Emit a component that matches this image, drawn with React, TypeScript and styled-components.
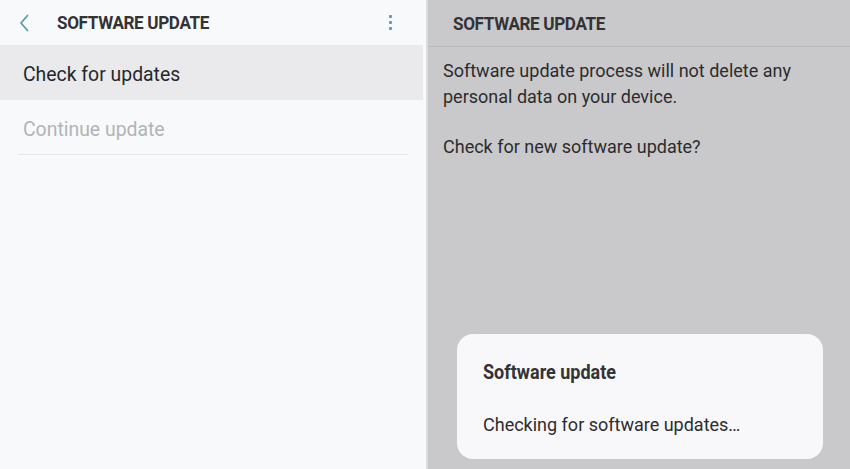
import styled, { createGlobalStyle } from "styled-components";

const GlobalStyle = createGlobalStyle`
  html, body {
    margin: 0;
    padding: 0;
    width: 850px;
    height: 469px;
    overflow: hidden;
    font-family: Roboto, "Liberation Sans", sans-serif;
  }
`;

const TEAL = "#5a9ea6";

const App = () => {
  return (
    <>
      <GlobalStyle />
      <StyledScreen>
        <StyledLeft>
          <StyledHeader>
            <StyledBack aria-label="Back">
              <svg width="12" height="18" viewBox="0 0 12 18">
                <path
                  d="M9.5 1.5 L3 9 L9.5 16.5"
                  fill="none"
                  stroke={TEAL}
                  strokeWidth="1.8"
                  strokeLinecap="round"
                  strokeLinejoin="round"
                />
              </svg>
            </StyledBack>
            <StyledTitle>SOFTWARE UPDATE</StyledTitle>
            <StyledMore aria-label="More options">
              <span />
              <span />
              <span />
            </StyledMore>
          </StyledHeader>
          <StyledList>
            <StyledItem $active>Check for updates</StyledItem>
            <StyledItem $disabled>Continue update</StyledItem>
          </StyledList>
        </StyledLeft>
        <StyledDivider />
        <StyledRight>
          <StyledRightHeader>
            <StyledTitle>SOFTWARE UPDATE</StyledTitle>
          </StyledRightHeader>
          <StyledBody>
            <p>
              Software update process will not delete any personal data on your
              device.
            </p>
            <p>Check for new software update?</p>
          </StyledBody>
          <StyledDialog>
            <StyledDialogTitle>Software update</StyledDialogTitle>
            <StyledDialogText>Checking for software updates…</StyledDialogText>
          </StyledDialog>
        </StyledRight>
      </StyledScreen>
    </>
  );
};

const StyledScreen = styled.div`
  display: flex;
  width: 850px;
  height: 469px;
`;

const StyledLeft = styled.section`
  width: 426px;
  background: #f8f9fb;
  display: flex;
  flex-direction: column;
`;

const StyledDivider = styled.div`
  width: 2px;
  background: #dcdcde;
`;

const StyledHeader = styled.header`
  height: 45px;
  display: flex;
  align-items: center;
  padding: 0 34px 0 18px;
`;

const StyledBack = styled.div`
  width: 39px;
  display: flex;
  align-items: center;
`;

const StyledTitle = styled.h1`
  margin: 0;
  flex: 1;
  font-size: 19px;
  font-weight: 700;
  color: #333336;
  letter-spacing: -0.4px;
  transform: scaleX(0.9);
  transform-origin: left center;
  white-space: nowrap;
`;

const StyledMore = styled.div`
  display: flex;
  flex-direction: column;
  gap: 2.5px;

  span {
    width: 3.5px;
    height: 3.5px;
    border-radius: 1px;
    background: ${TEAL};
  }
`;

const StyledList = styled.div`
  display: flex;
  flex-direction: column;
  padding-right: 3px;
`;

const StyledItem = styled.div<{ $active?: boolean; $disabled?: boolean }>`
  height: 55px;
  box-sizing: border-box;
  padding-top: 3px;
  display: flex;
  align-items: center;
  padding-left: 23px;
  font-size: 19.4px;
  color: ${(p) => (p.$disabled ? "#b2b3b6" : "#26272a")};
  background: ${(p) => (p.$active ? "#eaeaec" : "transparent")};
  position: relative;

  &::after {
    content: "";
    position: absolute;
    left: 18px;
    right: 15px;
    bottom: 0;
    height: 1px;
    background: ${(p) => (p.$active ? "transparent" : "#e6e7ea")};
  }
`;

const StyledRight = styled.section`
  flex: 1;
  background: #c9c9cb;
  display: flex;
  flex-direction: column;
`;

const StyledRightHeader = styled.header`
  height: 46px;
  display: flex;
  align-items: center;
  padding-left: 25px;
  border-bottom: 1px solid #bbbbbd;
`;

const StyledBody = styled.div`
  padding: 11px 15px 0;
  font-size: 18px;
  line-height: 26px;
  color: #2c2c2e;
  flex: 1;

  p {
    margin: 0 0 24px;
  }
`;

const StyledDialog = styled.div`
  margin: 0 27px 10px 29px;
  height: 125px;
  box-sizing: border-box;
  background: #f8f8fa;
  border-radius: 16px;
  padding: 26px 26px 0;
  display: flex;
  flex-direction: column;
`;

const StyledDialogTitle = styled.h2`
  margin: 0;
  font-size: 20px;
  font-weight: 700;
  color: #333336;
  transform: scaleX(0.9);
  transform-origin: left center;
  white-space: nowrap;
`;

const StyledDialogText = styled.p`
  margin: 30px 0 0;
  font-size: 18px;
  color: #2c2c2e;
`;

export default App;
